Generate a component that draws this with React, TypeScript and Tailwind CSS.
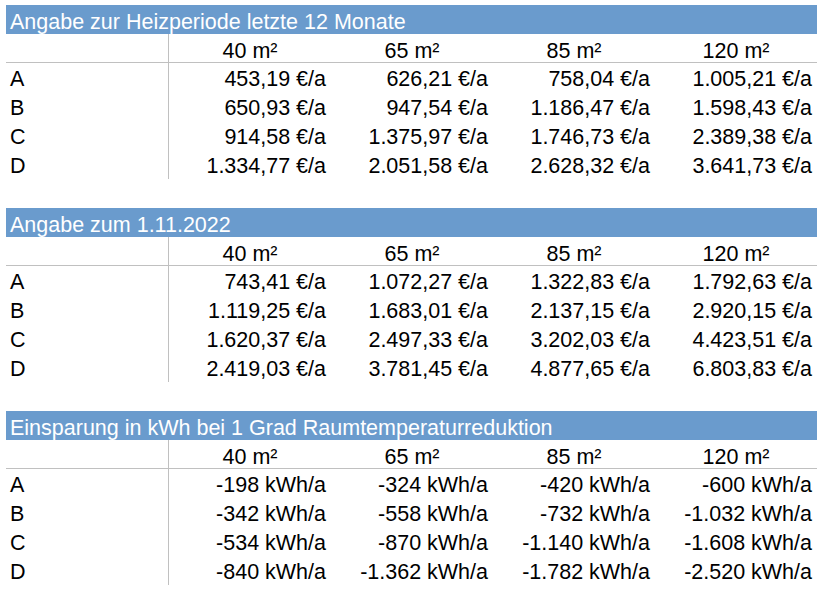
import React from "react";

type Section = { title: string; rows: [string, string[]][] };

const sections: Section[] = [
  {
    title: "Angabe zur Heizperiode letzte 12 Monate",
    rows: [
      ["A", ["453,19 €/a", "626,21 €/a", "758,04 €/a", "1.005,21 €/a"]],
      ["B", ["650,93 €/a", "947,54 €/a", "1.186,47 €/a", "1.598,43 €/a"]],
      ["C", ["914,58 €/a", "1.375,97 €/a", "1.746,73 €/a", "2.389,38 €/a"]],
      ["D", ["1.334,77 €/a", "2.051,58 €/a", "2.628,32 €/a", "3.641,73 €/a"]],
    ],
  },
  {
    title: "Angabe zum 1.11.2022",
    rows: [
      ["A", ["743,41 €/a", "1.072,27 €/a", "1.322,83 €/a", "1.792,63 €/a"]],
      ["B", ["1.119,25 €/a", "1.683,01 €/a", "2.137,15 €/a", "2.920,15 €/a"]],
      ["C", ["1.620,37 €/a", "2.497,33 €/a", "3.202,03 €/a", "4.423,51 €/a"]],
      ["D", ["2.419,03 €/a", "3.781,45 €/a", "4.877,65 €/a", "6.803,83 €/a"]],
    ],
  },
  {
    title: "Einsparung in kWh bei 1 Grad Raumtemperaturreduktion",
    rows: [
      ["A", ["-198 kWh/a", "-324 kWh/a", "-420 kWh/a", "-600 kWh/a"]],
      ["B", ["-342 kWh/a", "-558 kWh/a", "-732 kWh/a", "-1.032 kWh/a"]],
      ["C", ["-534 kWh/a", "-870 kWh/a", "-1.140 kWh/a", "-1.608 kWh/a"]],
      ["D", ["-840 kWh/a", "-1.362 kWh/a", "-1.782 kWh/a", "-2.520 kWh/a"]],
    ],
  },
];

const sizes = ["40 m²", "65 m²", "85 m²", "120 m²"];

function Block({ s }: { s: Section }) {
  return (
    <div className="flex flex-col w-[811px]">
      <div className="h-[29px] bg-[#6a9bcd] text-white flex items-end pl-[4px] pb-[1px] leading-none">
        {s.title}
      </div>
      <div className="flex h-[29px] border-b border-[#c0c0c0]">
        <div className="w-[162px]" />
        <div className="flex border-l border-[#c0c0c0]">
          {sizes.map((z) => (
            <div key={z} className="w-[162px] flex items-end justify-center pb-0 leading-none">
              {z}
            </div>
          ))}
        </div>
      </div>
      {s.rows.map(([label, vals]) => (
        <div key={label} className="flex h-[29px]">
          <div className="w-[162px] pl-[4px] flex items-end pb-[2px] leading-none">{label}</div>
          <div className="flex border-l border-[#c0c0c0]">
            {vals.map((v, j) => (
              <div key={j} className="w-[162px] flex items-end justify-end pr-[5px] pb-[2px] leading-none">
                {v}
              </div>
            ))}
          </div>
        </div>
      ))}
    </div>
  );
}

export default function App() {
  return (
    <div
      className="w-[823px] h-[599px] bg-white text-black text-[21.5px] pt-[5px] pl-[6px] flex flex-col gap-[29px]"
      style={{ fontFamily: '"Liberation Sans", Arial, sans-serif' }}
    >
      {sections.map((s) => (
        <Block key={s.title} s={s} />
      ))}
    </div>
  );
}
